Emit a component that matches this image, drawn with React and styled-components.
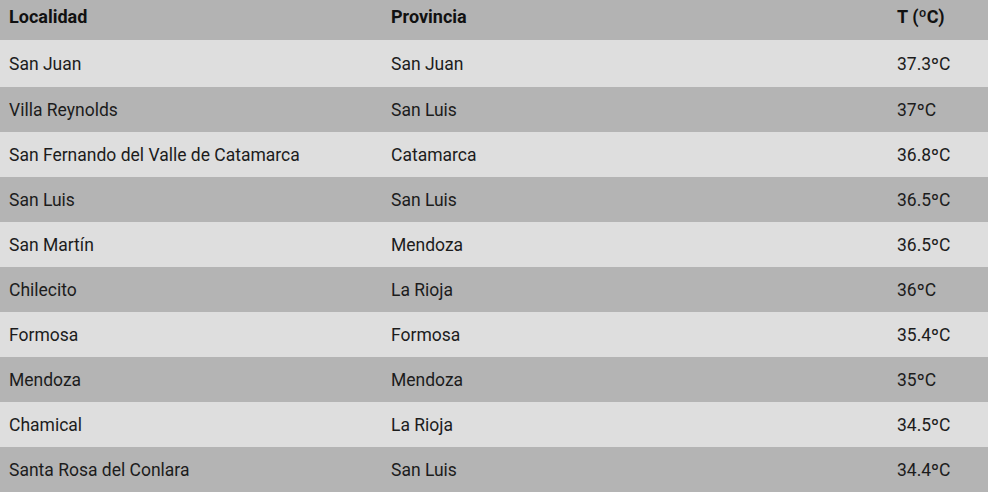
import React from 'react';
import styled, { createGlobalStyle } from 'styled-components';

const GlobalStyle = createGlobalStyle`
  html, body {
    margin: 0;
    padding: 0;
    background: #ffffff;
  }
  body {
    font-family: Roboto, "Liberation Sans", Arial, sans-serif;
  }
`;

const Table = styled.table`
  width: 988px;
  border-collapse: collapse;
  table-layout: fixed;
  font-family: Roboto, "Liberation Sans", Arial, sans-serif;
  font-size: 17.5px;
  color: #1c1c1c;
`;

const HeadRow = styled.tr`
  height: 40px;
  background: #b3b3b3;
`;

const HeadCell = styled.th`
  text-align: left;
  font-size: 18px;
  font-weight: 700;
  padding: 0 0 7px 9px;
  color: #111;
  vertical-align: middle;
`;

const Row = styled.tr`
  height: ${(p) => (p.$first ? '47px' : '45px')};
  background: ${(p) => (p.$odd ? '#b4b4b4' : '#dedede')};
`;

const Cell = styled.td`
  padding: 0 0 0 9px;
  vertical-align: middle;
  white-space: nowrap;
`;

const rows = [
  ['San Juan', 'San Juan', '37.3ºC'],
  ['Villa Reynolds', 'San Luis', '37ºC'],
  ['San Fernando del Valle de Catamarca', 'Catamarca', '36.8ºC'],
  ['San Luis', 'San Luis', '36.5ºC'],
  ['San Martín', 'Mendoza', '36.5ºC'],
  ['Chilecito', 'La Rioja', '36ºC'],
  ['Formosa', 'Formosa', '35.4ºC'],
  ['Mendoza', 'Mendoza', '35ºC'],
  ['Chamical', 'La Rioja', '34.5ºC'],
  ['Santa Rosa del Conlara', 'San Luis', '34.4ºC'],
];

const App = () => {
  return (
    <>
      <GlobalStyle />
      <Table>
        <colgroup>
          <col style={{ width: 382 }} />
          <col style={{ width: 506 }} />
          <col style={{ width: 100 }} />
        </colgroup>
        <thead>
          <HeadRow>
            <HeadCell>Localidad</HeadCell>
            <HeadCell>Provincia</HeadCell>
            <HeadCell>T (ºC)</HeadCell>
          </HeadRow>
        </thead>
        <tbody>
          {rows.map((r, i) => (
            <Row key={i} $odd={i % 2 === 1} $first={i === 0}>
              <Cell>{r[0]}</Cell>
              <Cell>{r[1]}</Cell>
              <Cell>{r[2]}</Cell>
            </Row>
          ))}
        </tbody>
      </Table>
    </>
  );
};

export default App;
